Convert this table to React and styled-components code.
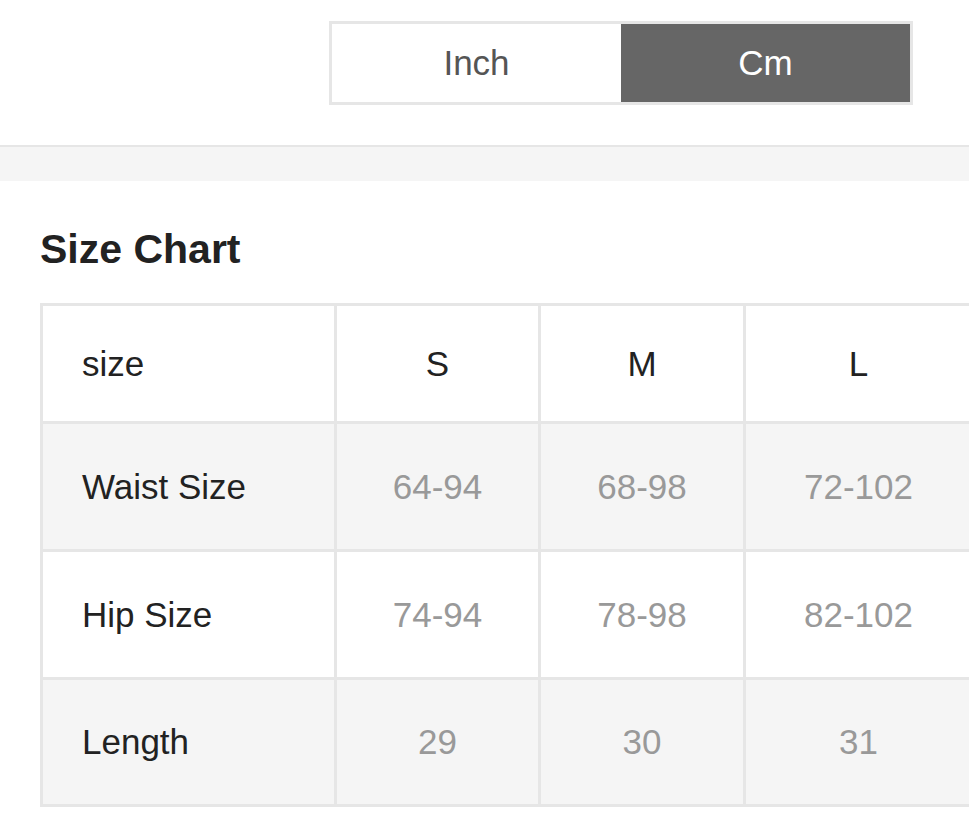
import React, { useState } from "react"
import styled, { createGlobalStyle } from "styled-components"

const GlobalStyle = createGlobalStyle`
	html, body {
		margin: 0;
		padding: 0;
		background: #fff;
		overflow-x: hidden;
	}
	body {
		font-family: "Liberation Sans", Arial, sans-serif;
		color: #222;
	}
`

const Page = styled.div`
	width: 969px;
	overflow: hidden;
`

const TopBar = styled.div`
	height: 145px;
	display: flex;
	justify-content: flex-end;
	align-items: flex-start;
	padding: 21px 56px 0 0;
	box-sizing: border-box;
`

const Toggle = styled.div`
	display: flex;
	border: 3px solid #e6e6e6;
`

const ToggleButton = styled.button`
	width: 289px;
	height: 78px;
	border: none;
	margin: 0;
	padding: 0;
	font-family: "Liberation Sans", Arial, sans-serif;
	font-size: 35px;
	cursor: pointer;
	background: ${(p) => (p.$active ? "#666666" : "#ffffff")};
	color: ${(p) => (p.$active ? "#ffffff" : "#555555")};
`

const Band = styled.div`
	height: 34px;
	border-top: 2px solid #e6e6e6;
	background: #f5f5f5;
`

const Section = styled.section`
	padding: 48px 0 0 40px;
`

const Title = styled.h2`
	margin: 0 0 34px;
	font-size: 41px;
	line-height: 40px;
	font-weight: 700;
	color: #222;
`

const Table = styled.table`
	table-layout: fixed;
	width: 934px;
	border-collapse: separate;
	border-spacing: 0;
	border-top: 3px solid #e6e6e6;
	border-left: 3px solid #e6e6e6;
	font-size: 35px;
`

const Tr = styled.tr`
	background: ${(p) => (p.$shaded ? "#f5f5f5" : "#ffffff")};
`

const Cell = styled.td`
	box-sizing: border-box;
	height: ${(p) => p.$h}px;
	padding: 0;
	border-right: 3px solid #e6e6e6;
	border-bottom: 3px solid #e6e6e6;
	vertical-align: middle;
	font-weight: 400;
	text-align: center;
	color: #999;
	white-space: nowrap;
`

const LabelCell = styled(Cell)`
	text-align: left;
	padding-left: 39px;
	color: #222;
`

const HeadCell = styled(Cell)`
	color: #222;
`

const colWidths = [294, 204, 205, 228]
const sizes = ["S", "M", "L"]

const rows = [
	{ label: "Waist Size", values: { cm: ["64-94", "68-98", "72-102"], inch: ["25.2-37.0", "26.8-38.6", "28.3-40.2"] }, h: 128 },
	{ label: "Hip Size", values: { cm: ["74-94", "78-98", "82-102"], inch: ["29.1-37.0", "30.7-38.6", "32.3-40.2"] }, h: 128 },
	{ label: "Length", values: { cm: ["29", "30", "31"], inch: ["11.4", "11.8", "12.2"] }, h: 127 },
]

export default function App() {
	const [unit, setUnit] = useState("cm")

	return (
		<Page>
			<GlobalStyle />
			<TopBar>
				<Toggle>
					<ToggleButton $active={unit === "inch"} onClick={() => setUnit("inch")}>
						Inch
					</ToggleButton>
					<ToggleButton $active={unit === "cm"} onClick={() => setUnit("cm")}>
						Cm
					</ToggleButton>
				</Toggle>
			</TopBar>
			<Band />
			<Section>
				<Title>Size Chart</Title>
				<Table>
					<colgroup>
						{colWidths.map((w, i) => (
							<col key={i} style={{ width: w }} />
						))}
					</colgroup>
					<tbody>
						<Tr>
							<LabelCell as="th" $h={118}>size</LabelCell>
							{sizes.map((s) => (
								<HeadCell as="th" key={s} $h={118}>
									{s}
								</HeadCell>
							))}
						</Tr>
						{rows.map((row, i) => (
							<Tr key={row.label} $shaded={i % 2 === 0}>
								<LabelCell $h={row.h}>{row.label}</LabelCell>
								{row.values[unit].map((v, j) => (
									<Cell key={j} $h={row.h}>
										{v}
									</Cell>
								))}
							</Tr>
						))}
					</tbody>
				</Table>
			</Section>
		</Page>
	)
}
